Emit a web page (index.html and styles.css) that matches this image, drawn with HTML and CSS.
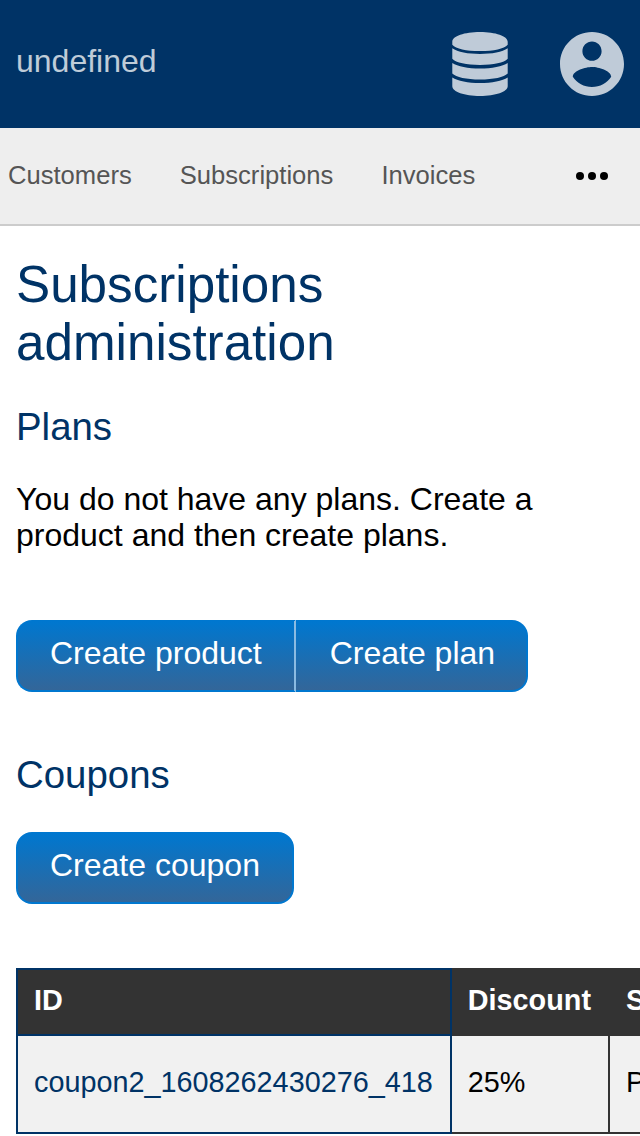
FILE: index.html
```html
<!DOCTYPE html>
<html lang="en">
<head>
<meta charset="utf-8">
<title>Subscriptions administration</title>
<link rel="stylesheet" href="styles.css">
</head>
<body>
<header class="header">
  <span class="brand">undefined</span>
  <svg class="icon-db" viewBox="0 0 56 64"><path d="M.3 9.700C.3 4.200 12.500 0 28 0s27.700 4.200 27.700 9.700v3C52 16.800 42 19 28 19S4 16.800 .3 12.700zM.3 16.300C5.500 20 16 22 28 22s22.500-2 27.700-5.700V26.800C52 30.800 41.500 33 28 33S4 30.800 .3 26.800zM.3 31C5.500 34.500 16 36.500 28 36.500S50.500 34.500 55.700 31V41.500C52 45.300 41.500 47.500 28 47.500S4 45.300 .3 41.500zM.3 45.500C5.500 49 16 51 28 51s22.500-2 27.700-5.500V54.300C55.700 59.800 43.500 64 28 64S.3 59.800 .3 54.300z"/></svg>
  <svg class="icon-user" viewBox="2 2 20 20"><path d="M12 2C6.480 2 2 6.480 2 12s4.480 10 10 10 10-4.480 10-10S17.520 2 12 2zm0 3c1.660 0 3 1.340 3 3s-1.340 3-3 3-3-1.340-3-3 1.340-3 3-3zm0 14.200c-2.500 0-4.710-1.280-6-3.220.030-1.990 4-3.080 6-3.080 1.990 0 5.970 1.090 6 3.080-1.290 1.940-3.500 3.220-6 3.220z"/></svg>
</header>
<nav class="nav">
  <a class="nav-link">Customers</a>
  <a class="nav-link">Subscriptions</a>
  <a class="nav-link">Invoices</a>
  <svg class="more" viewBox="0 0 32 8"><circle cx="4" cy="4" r="4"/><circle cx="16" cy="4" r="4"/><circle cx="28" cy="4" r="4"/></svg>
</nav>
<main class="main">
  <h1 class="title">Subscriptions administration</h1>
  <h2 class="section-title">Plans</h2>
  <p class="text">You do not have any plans. Create a product and then create plans.</p>
  <div class="buttons plans-buttons"><a class="button">Create product</a><a class="button">Create plan</a></div>
  <h2 class="section-title coupons-title">Coupons</h2>
  <div class="buttons coupon-buttons"><a class="button">Create coupon</a></div>
  <table class="table">
    <thead><tr><th class="id">ID</th><th>Discount</th><th>Status</th></tr></thead>
    <tbody><tr><td class="id">coupon2_1608262430276_418</td><td>25%</td><td>Published</td></tr></tbody>
  </table>
</main>
</body>
</html>
```
FILE: styles.css
```css
* { box-sizing: border-box; }
body {
  margin: 0;
  height: 1136px;
  overflow: hidden;
  background: #fff;
  color: #000;
  font: 32px/36px "Liberation Sans", Arial, sans-serif;
}
.header {
  display: flex;
  align-items: center;
  height: 128px;
  padding: 0 16px;
  background: #036;
  color: rgba(255, 255, 255, .75);
}
.brand { margin-right: auto; padding-bottom: 6px; }
.icon-db { width: 56px; height: 64px; margin-right: 52px; fill: currentColor; }
.icon-user { width: 64px; height: 64px; fill: currentColor; }
.nav {
  display: flex;
  align-items: center;
  gap: 48px;
  height: 98px;
  padding: 0 32px 0 8px;
  border-bottom: 2px solid #ccc;
  background: #eee;
  color: #555;
  font-size: 25.6px;
}
.nav-link { padding-bottom: 2px; }
.more { width: 32px; height: 8px; margin-left: auto; fill: #000; }
.main { height: 910px; padding: 30px 16px 0; overflow: hidden; }
.title {
  width: 400px;
  margin: 0 0 33px;
  color: #036;
  font-size: 51.2px;
  font-weight: 400;
  line-height: 58px;
}
.section-title {
  margin: 0 0 32px;
  color: #036;
  font-size: 38.4px;
  font-weight: 400;
  line-height: 44px;
}
.coupons-title { margin-bottom: 35px; }
.text { margin: 0 0 67px; }
.buttons { display: flex; }
.plans-buttons { margin-bottom: 61px; }
.coupon-buttons { margin-bottom: 64px; }
.button {
  height: 72px;
  padding: 13px 32px 0;
  border: 2px solid #0077cf;
  background: linear-gradient(#0077cf, #369);
  color: #fff;
}
.button:first-child { border-radius: 16px 0 0 16px; }
.button:last-child { border-radius: 0 16px 16px 0; }
.button:only-child { border-radius: 16px; }
.button:not(:last-child) { border-right-color: #8bbbe2; }
.button + .button { padding-left: 34px; padding-right: 31px; border-left: 0; }
.table { border-collapse: collapse; font-size: 28.8px; line-height: 32px; white-space: nowrap; }
.table th, .table td { padding: 13px 17px 17px 16px; border: 2px solid #333; text-align: left; }
.table th { height: 66px; background: #333; color: #fff; }
.table td { height: 98px; padding-top: 12px; background: #f1f1f1; }
.table .id { border-color: #036; }
.table td.id { color: #036; }
```
